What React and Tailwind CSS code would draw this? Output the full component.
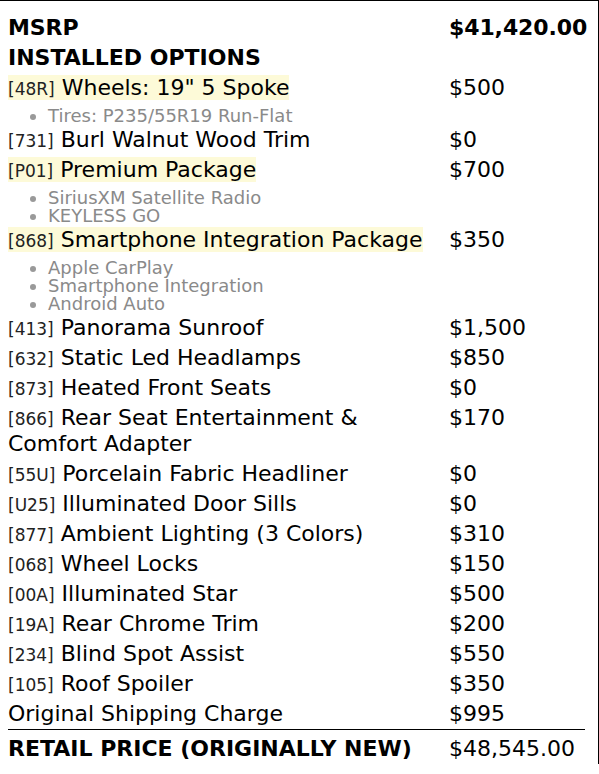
import React from "react";

const options = [
  { code: "48R", name: 'Wheels: 19" 5 Spoke', price: "$500", hl: true, subs: ["Tires: P235/55R19 Run-Flat"] },
  { code: "731", name: "Burl Walnut Wood Trim", price: "$0" },
  { code: "P01", name: "Premium Package", price: "$700", hl: true, subs: ["SiriusXM Satellite Radio", "KEYLESS GO"] },
  {
    code: "868",
    name: "Smartphone Integration Package",
    price: "$350",
    hl: true,
    subs: ["Apple CarPlay", "Smartphone Integration", "Android Auto"],
  },
  { code: "413", name: "Panorama Sunroof", price: "$1,500" },
  { code: "632", name: "Static Led Headlamps", price: "$850" },
  { code: "873", name: "Heated Front Seats", price: "$0" },
  { code: "866", name: "Rear Seat Entertainment & Comfort Adapter", price: "$170" },
  { code: "55U", name: "Porcelain Fabric Headliner", price: "$0" },
  { code: "U25", name: "Illuminated Door Sills", price: "$0" },
  { code: "877", name: "Ambient Lighting (3 Colors)", price: "$310" },
  { code: "068", name: "Wheel Locks", price: "$150" },
  { code: "00A", name: "Illuminated Star", price: "$500" },
  { code: "19A", name: "Rear Chrome Trim", price: "$200" },
  { code: "234", name: "Blind Spot Assist", price: "$550" },
  { code: "105", name: "Roof Spoiler", price: "$350" },
];

const Row = ({ left, right, className = "" }) => (
  <div className={`grid grid-cols-[441px_136px] ${className}`}>
    <div className="py-[2px]">{left}</div>
    <div className="py-[2px]">{right}</div>
  </div>
);

const OptionRow = ({ code, name, price, hl, subs }) => (
  <div className="grid grid-cols-[441px_136px]">
    <div className="py-[2px]">
      <span className={hl ? "bg-[#fdfad8]" : ""}>
        <span className="text-[17px] leading-none text-[#222]">[{code}]</span> {name}
      </span>
      {subs && (
        <ul className="mt-[6px] -mb-[2px] pl-[40px] list-disc text-[18px] leading-[18px] text-[#8a8a8a] marker:text-[#999]">
          {subs.map((s) => (
            <li key={s}>{s}</li>
          ))}
        </ul>
      )}
    </div>
    <div className="py-[2px]">{price}</div>
  </div>
);

export default function App() {
  return (
    <div
      className="w-[599px] border-t border-r border-black bg-white pt-[12px] pl-[8px] text-[22px] leading-[26px] text-black"
      style={{ fontFamily: '"DejaVu Sans", sans-serif' }}
    >
      <div className="w-[577px]">
        <Row className="font-bold tracking-[-0.1px]" left="MSRP" right="$41,420.00" />
        <Row className="font-bold" left="INSTALLED OPTIONS" right="" />
        {options.map((o) => (
          <OptionRow key={o.code} {...o} />
        ))}
        <Row left="Original Shipping Charge" right="$995" />
        <div className="border-t border-black pt-[4px]">
          <Row left={<span className="font-bold">RETAIL PRICE (ORIGINALLY NEW)</span>} right="$48,545.00" />
        </div>
      </div>
    </div>
  );
}
